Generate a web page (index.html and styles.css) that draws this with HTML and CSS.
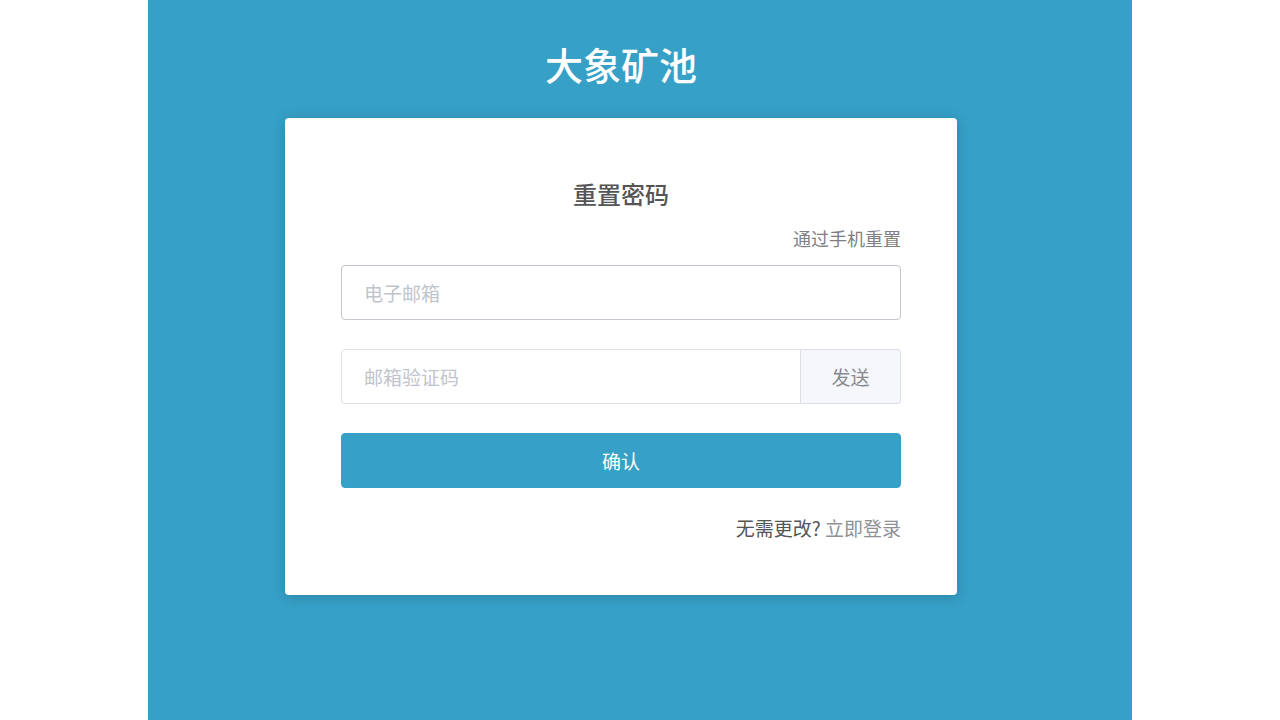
FILE: index.html
```html
<!DOCTYPE html>
<html lang="zh-CN">
<head>
<meta charset="utf-8">
<title>大象矿池 - 重置密码</title>
<link rel="stylesheet" href="styles.css">
</head>
<body>
<div class="panel">
  <h1 class="brand">大象矿池</h1>
  <div class="card">
    <h2 class="card-title">重置密码</h2>
    <div class="switch-row"><a class="switch-link" href="#">通过手机重置</a></div>
    <div class="field">
      <input class="input input-hover" type="text" placeholder="电子邮箱">
    </div>
    <div class="field group">
      <input class="input group-input" type="text" placeholder="邮箱验证码">
      <button class="send-btn" type="button">发送</button>
    </div>
    <button class="confirm-btn" type="button">确认</button>
    <div class="footer-row">
      <span class="footer-q">无需更改?</span> <a class="footer-link" href="#">立即登录</a>
    </div>
  </div>
</div>
</body>
</html>
```

FILE: styles.css
```css
* { box-sizing: border-box; }
html, body { margin: 0; padding: 0; background: #ffffff; }
body {
  font-family: "Noto Sans CJK SC", "Noto Sans", "Liberation Sans", sans-serif;
}
.panel {
  width: 984px;
  min-height: 720px;
  margin: 0 auto;
  background: #36a0c7;
  padding: 36px 38px 0 0;
  display: flex;
  flex-direction: column;
  align-items: center;
}
.brand {
  margin: 0;
  font-size: 38px;
  line-height: 56px;
  font-weight: 500;
  color: #ffffff;
}
.card {
  margin-top: 26px;
  width: 672px;
  background: #ffffff;
  border-radius: 4px;
  box-shadow: 0 2px 14px rgba(0, 0, 0, 0.18);
  padding: 58px 56px 53px;
  display: flex;
  flex-direction: column;
}
.card-title {
  margin: 0;
  text-align: center;
  font-size: 24px;
  line-height: 36px;
  font-weight: 500;
  color: #555555;
}
.switch-row {
  margin-top: 12px;
  text-align: right;
  line-height: 28px;
}
.switch-link {
  font-size: 18px;
  color: #7d7f85;
  text-decoration: none;
}
.field {
  margin-top: 12px;
  height: 55px;
}
.field + .field { margin-top: 29px; }
.input {
  width: 100%;
  height: 55px;
  border: 1px solid #dcdfe6;
  border-radius: 4px;
  padding: 0 22px;
  font-family: inherit;
  font-size: 19px;
  color: #606266;
  outline: none;
  background: #ffffff;
}
.input::placeholder { color: #c0c4cc; }
.input-hover { border-color: #c4c6cf; }
.group {
  display: flex;
}
.group-input {
  flex: 1;
  border-top-right-radius: 0;
  border-bottom-right-radius: 0;
}
.send-btn {
  width: 100px;
  height: 55px;
  border: 1px solid #dcdfe6;
  border-left: none;
  border-radius: 0 4px 4px 0;
  background: #f5f7fa;
  color: #888a90;
  font-family: inherit;
  font-size: 19px;
  padding: 0;
}
.confirm-btn {
  margin-top: 29px;
  height: 55px;
  width: 100%;
  border: 1px solid #36a0c7;
  border-radius: 4px;
  background: #36a0c7;
  color: #ffffff;
  font-family: inherit;
  font-size: 19px;
  padding: 0;
}
.footer-row {
  margin-top: 26px;
  text-align: right;
  line-height: 28px;
  font-size: 19px;
}
.footer-q { color: #555555; }
.footer-link { color: #8e9096; text-decoration: none; }
```
